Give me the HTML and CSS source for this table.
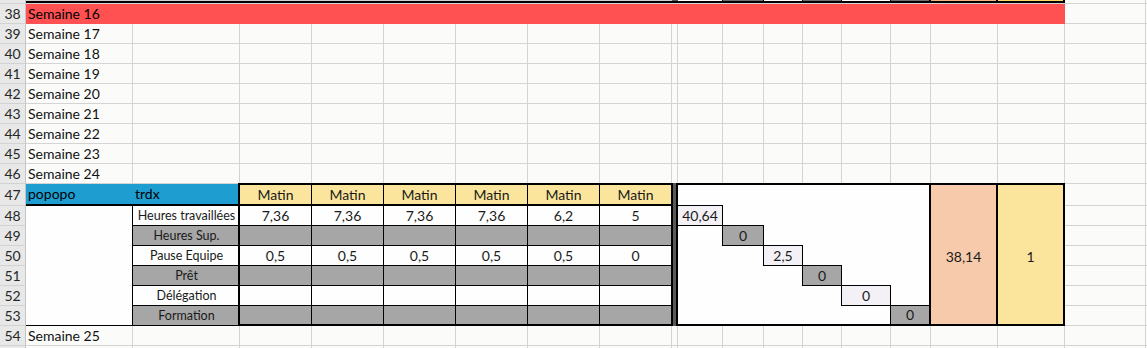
FILE: index.html
```html
<!DOCTYPE html>
<html lang="fr">
<head>
<meta charset="utf-8">
<title>Planning</title>
<link rel="stylesheet" href="styles.css">
</head>
<body>
<div class="sheet">
  <div class="h h-top"></div>
  <div class="strip s-ah"></div>
  <div class="strip s-i"></div>
  <div class="strip s-w sep"></div>
  <div class="strip s-g sep"></div>
  <div class="strip s-w sep"></div>
  <div class="strip s-g sep"></div>
  <div class="strip s-w sep"></div>
  <div class="strip s-g thick"></div>
  <div class="strip s-p thick"></div>
  <div class="strip s-q thick"></div>

  <div class="h">38</div><div class="cell red">Semaine 16</div>
  <div class="h">39</div><div class="cell">Semaine 17</div>
  <div class="h">40</div><div class="cell">Semaine 18</div>
  <div class="h">41</div><div class="cell">Semaine 19</div>
  <div class="h">42</div><div class="cell">Semaine 20</div>
  <div class="h">43</div><div class="cell">Semaine 21</div>
  <div class="h">44</div><div class="cell">Semaine 22</div>
  <div class="h">45</div><div class="cell">Semaine 23</div>
  <div class="h">46</div><div class="cell">Semaine 24</div>

  <div class="h h-tall">47</div>
  <div class="cell blue">popopo</div>
  <div class="cell blue">trdx</div>
  <div class="cblock">
    <div class="v matin">Matin</div><div class="v matin">Matin</div><div class="v matin">Matin</div><div class="v matin">Matin</div><div class="v matin">Matin</div><div class="v matin">Matin</div>
    <div class="v">7,36</div><div class="v">7,36</div><div class="v">7,36</div><div class="v">7,36</div><div class="v">6,2</div><div class="v">5</div>
    <div class="v gray"></div><div class="v gray"></div><div class="v gray"></div><div class="v gray"></div><div class="v gray"></div><div class="v gray"></div>
    <div class="v">0,5</div><div class="v">0,5</div><div class="v">0,5</div><div class="v">0,5</div><div class="v">0,5</div><div class="v">0</div>
    <div class="v gray"></div><div class="v gray"></div><div class="v gray"></div><div class="v gray"></div><div class="v gray"></div><div class="v gray"></div>
    <div class="v"></div><div class="v"></div><div class="v"></div><div class="v"></div><div class="v"></div><div class="v"></div>
    <div class="v gray"></div><div class="v gray"></div><div class="v gray"></div><div class="v gray"></div><div class="v gray"></div><div class="v gray"></div>
  </div>
  <div class="icol"></div>
  <div class="jblock">
    <div class="dg dg1">40,64</div>
    <div class="dg dg2 gray">0</div>
    <div class="dg dg3">2,5</div>
    <div class="dg dg4 gray">0</div>
    <div class="dg dg5">0</div>
    <div class="dg dg6 gray">0</div>
  </div>
  <div class="total orange">38,14</div>
  <div class="total yellow">1</div>

  <div class="h">48</div><div class="amerge"></div><div class="cell lbl">Heures travaillées</div>
  <div class="h">49</div><div class="cell lbl gray">Heures Sup.</div>
  <div class="h">50</div><div class="cell lbl">Pause Equipe</div>
  <div class="h">51</div><div class="cell lbl gray">Prêt</div>
  <div class="h">52</div><div class="cell lbl">Délégation</div>
  <div class="h">53</div><div class="cell lbl gray">Formation</div>
  <div class="h">54</div><div class="cell">Semaine 25</div>
  <div class="h"></div>
</div>
</body>
</html>
```

FILE: styles.css
```css
* { box-sizing: border-box; }
html, body { margin: 0; padding: 0; }
body {
  width: 1147px;
  height: 348px;
  overflow: hidden;
  background: #fbfcfa;
  font-family: Lato, "Liberation Sans", sans-serif;
  color: #111;
}

.sheet {
  --g: #d4d4d4;
  display: grid;
  grid-template-columns: 26px 107px 107px repeat(6, 72px) 6px 45px 41px 39px 39px 49px 40px 67px 67px 81px 1fr;
  grid-template-rows: 4px repeat(9, 20px) 22px repeat(6, 20px) 20px 20px;
  grid-auto-flow: row;
  height: 348px;
  overflow: hidden;
  background-color: #fbfcfa;
  background-image:
    repeating-linear-gradient(to bottom, transparent 0 3px, var(--g) 3px 4px, transparent 4px 20px),
    repeating-linear-gradient(to bottom, transparent 0 19px, var(--g) 19px 20px),
    linear-gradient(var(--g), var(--g)), linear-gradient(var(--g), var(--g)),
    linear-gradient(var(--g), var(--g)), linear-gradient(var(--g), var(--g)),
    linear-gradient(var(--g), var(--g)), linear-gradient(var(--g), var(--g)),
    linear-gradient(var(--g), var(--g)), linear-gradient(var(--g), var(--g)),
    linear-gradient(var(--g), var(--g)), linear-gradient(var(--g), var(--g)),
    linear-gradient(var(--g), var(--g)), linear-gradient(var(--g), var(--g)),
    linear-gradient(var(--g), var(--g)), linear-gradient(var(--g), var(--g)),
    linear-gradient(var(--g), var(--g)), linear-gradient(var(--g), var(--g)),
    linear-gradient(var(--g), var(--g)), linear-gradient(var(--g), var(--g));
  background-size:
    100% 184px, 100% 200px,
    1px 100%, 1px 100%, 1px 100%, 1px 100%, 1px 100%, 1px 100%,
    1px 100%, 1px 100%, 1px 100%, 1px 100%, 1px 100%, 1px 100%,
    1px 100%, 1px 100%, 1px 100%, 1px 100%, 1px 100%, 1px 100%;
  background-position:
    0 0, 0 186px,
    132px 0, 239px 0, 311px 0, 383px 0, 455px 0, 527px 0,
    599px 0, 671px 0, 677px 0, 722px 0, 763px 0, 802px 0,
    841px 0, 890px 0, 930px 0, 997px 0, 1064px 0, 1145px 0;
  background-repeat: no-repeat;
}

/* row headers */
.h {
  grid-column: 1;
  background: #e8e8e8;
  border-right: 1px solid #c4c4c4;
  border-bottom: 1px solid #d2d2d2;
  color: #262626;
  font-size: 14px;
  line-height: 19px;
  text-align: center;
}
.h-tall { line-height: 21px; }

/* top strip (end of previous row) */
.strip {
  align-self: start;
  height: 3px;
  border-bottom: 2px solid #000;
}
.s-ah { grid-column: span 8; background: #d0d0d0; }
.s-i { background: #595959; }
.s-w { background: #ffffff; }
.s-g { background: #6e6e6e; }
.s-p { background: #f4b183; }
.s-q { background: #ffd966; }
.sep { border-right: 1px solid #000; }
.thick { border-right: 2px solid #000; }

/* ordinary cells */
.cell {
  font-size: 14px;
  line-height: 20px;
  padding-left: 2px;
  white-space: nowrap;
}
.red {
  grid-column: span 17;
  background: #ff5152;
  color: #000;
}
.blue {
  background: #1e9ed0;
  border-bottom: 2px solid #000;
  color: #000;
}
.amerge {
  grid-row: span 6;
  border-right: 1px solid #000;
  border-bottom: 1px solid #000;
  background: #fdfefd;
}
.lbl {
  font-size: 12.5px;
  line-height: 19px;
  padding-left: 0;
  text-align: center;
  background: #fdfefd;
  border-bottom: 1px solid #000;
  color: #1a1a1a;
}
.gray { background: #a6a6a6; }
.lbl.gray { background: #a6a6a6; }

/* C..H block */
.cblock {
  grid-column: span 6;
  grid-row: span 7;
  margin: -1px -1px 0 -2px;
  border: 2px solid #000;
  background: #000;
  display: grid;
  grid-template-columns: repeat(6, 71px);
  grid-template-rows: 20px repeat(5, 19px) 18px;
  gap: 1px;
  position: relative;
  z-index: 1;
}
.v {
  background: #fdfefd;
  font-size: 14px;
  line-height: 19px;
  text-align: center;
  color: #1a1a1a;
}
.v.gray { background: #a6a6a6; }
.matin {
  background: #fbe59c;
  margin-bottom: 1px;
}

.icol {
  grid-row: span 7;
  margin-top: -1px;
  background: #595959;
}

/* J..O block with staircase */
.jblock {
  grid-column: span 6;
  grid-row: span 7;
  margin: -1px 0 0 -2px;
  border: 2px solid #000;
  background: #fdfefd;
  display: grid;
  grid-template-columns: 45px 41px 39px 39px 49px 38px;
  grid-template-rows: 21px repeat(5, 20px) 18px;
  position: relative;
  z-index: 1;
}
.dg {
  margin: -1px 0 0 -1px;
  border: 1px solid #000;
  background: #f3f1f6;
  font-size: 14px;
  line-height: 19px;
  text-align: center;
  color: #1a1a1a;
}
.dg.gray { background: #a6a6a6; }
.dg1 { grid-area: 2 / 1; }
.dg2 { grid-area: 3 / 2; }
.dg3 { grid-area: 4 / 3; }
.dg4 { grid-area: 5 / 4; }
.dg5 { grid-area: 6 / 5; }
.dg6 { grid-area: 7 / 6; border-right: 0; border-bottom: 0; line-height: 18px; }

/* totals */
.total {
  grid-row: span 7;
  margin: -1px 0 0 -2px;
  border: 2px solid #000;
  display: flex;
  align-items: center;
  justify-content: center;
  font-size: 14px;
  color: #1a1a1a;
  position: relative;
  z-index: 1;
  padding-top: 4px;
}
.orange { background: #f8caac; }
.yellow { background: #fbe59c; }
```
